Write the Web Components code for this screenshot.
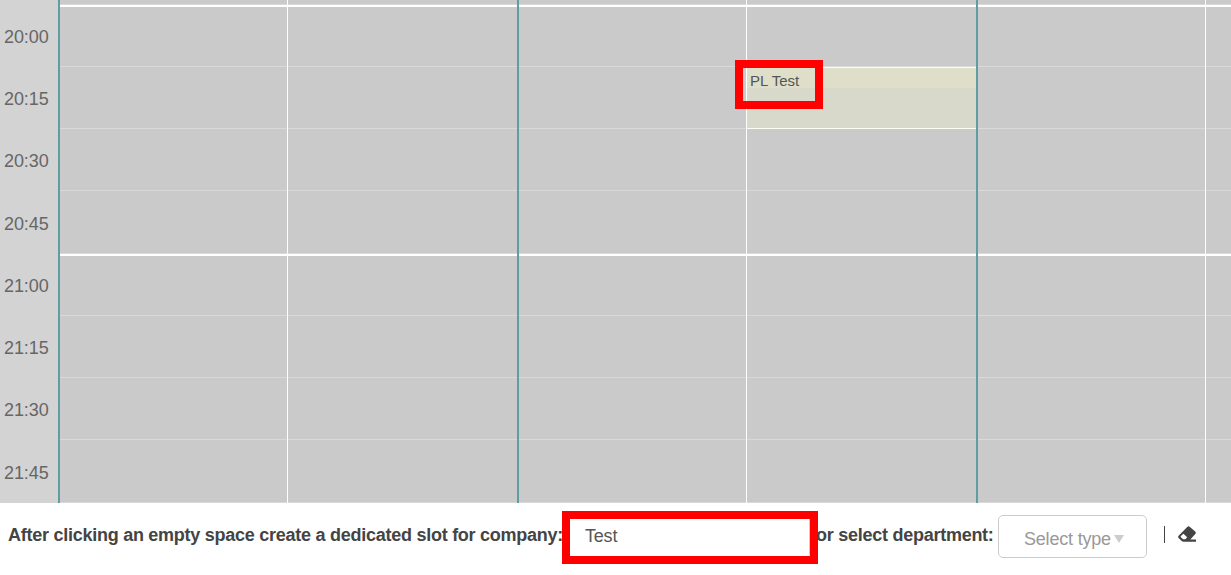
<!DOCTYPE html>
<html lang="en">
<head>
<meta charset="utf-8">
<title>Schedule</title>
<style>
    body {
        margin: 0;
        height: 575px;
        overflow: hidden;
        background: #fff;
        color: #444;
        font-family: "Liberation Sans", Arial, sans-serif;
        font-size: 18px;
    }
</style>
</head>
<body>
<schedule-view>
    <time-axis slot="axis" times="20:00,20:15,20:30,20:45,21:00,21:15,21:30,21:45"></time-axis>
    <day-column major style="width: 229px"></day-column>
    <day-column style="width: 230px"></day-column>
    <day-column major style="width: 229px"></day-column>
    <day-column style="width: 230px"><slot-event>PL Test</slot-event></day-column>
    <day-column major style="width: 229px"></day-column>
    <day-column style="width: 26px"></day-column>
</schedule-view>
<slot-toolbar>
    <span slot="company-label">After clicking an empty space create a dedicated slot for company:</span>
    <company-input slot="company">Test</company-input>
    <span slot="type-label">or select department:</span>
    <type-select slot="type">Select type</type-select>
</slot-toolbar>

<script>
    // quarter heights, the last one of each hour takes the spare pixel
    const ROWS = [62, 62, 62, 63, 62, 62, 62, 63];

    class ScheduleView extends HTMLElement {
        constructor() {
            super();
            this.attachShadow({ mode: 'open' });
            this.shadowRoot.innerHTML = `
                <style>
                    :host {
                        display: flex;
                        height: 503px;
                        background: #cacaca;
                    }
                </style>
                <slot name="axis"></slot>
                <slot></slot>`;
        }
    }
    customElements.define('schedule-view', ScheduleView);

    class TimeAxis extends HTMLElement {
        constructor() {
            super();
            this.attachShadow({ mode: 'open' });
            const times = this.getAttribute('times').split(',');
            this.shadowRoot.innerHTML = `
                <style>
                    :host {
                        display: flex;
                        flex-direction: column;
                        flex: none;
                        box-sizing: border-box;
                        width: 58px;
                        padding: 5px 0 0 4px;
                        background: #d3d3d3;
                        color: #666;
                        letter-spacing: -0.1px;
                    }
                    div {
                        flex: none;
                        box-sizing: border-box;
                        padding-top: 22px;
                        line-height: 20px;
                    }
                    div:nth-of-type(4n) {
                        padding-top: 23px;
                    }
                </style>
                ${times.map((t, i) => `<div style="height: ${ROWS[i]}px">${t}</div>`).join('')}`;
        }
    }
    customElements.define('time-axis', TimeAxis);

    class DayColumn extends HTMLElement {
        constructor() {
            super();
            this.attachShadow({ mode: 'open' });
            this.shadowRoot.innerHTML = `
                <style>
                    :host {
                        display: flex;
                        flex-direction: column;
                        flex: none;
                        position: relative;
                        box-sizing: border-box;
                        border-left: 1px solid #fff;
                    }
                    :host([major]) {
                        border-left: 2px solid #5f9ea0;
                    }
                    div {
                        flex: none;
                        box-sizing: border-box;
                        border-bottom: 1px solid #d9d9d9;
                    }
                    .hour {
                        border-top: 2px solid #fff;
                    }
                </style>
                <div style="height: 5px"></div>
                ${ROWS.map((h, i) => `<div class="${i % 4 ? '' : 'hour'}" style="height: ${h}px"></div>`).join('')}
                <slot></slot>`;
        }
    }
    customElements.define('day-column', DayColumn);

    class SlotEvent extends HTMLElement {
        constructor() {
            super();
            this.attachShadow({ mode: 'open' });
            this.shadowRoot.innerHTML = `
                <style>
                    :host {
                        position: absolute;
                        top: 67px;
                        left: 0;
                        right: 0;
                        height: 62px;
                        box-sizing: border-box;
                        border: solid #fdfdf0;
                        border-width: 1px 0;
                        background: #d8d9ca;
                        color: #555;
                        font-size: 15px;
                    }
                    .title {
                        height: 20px;
                        padding-left: 3px;
                        line-height: 26px;
                        background: #dedec9;
                    }
                    .mark {
                        position: absolute;
                        top: -8px;
                        left: -12px;
                        width: 72px;
                        height: 33px;
                        border: 8px solid #f00;
                    }
                </style>
                <div class="title"><slot></slot></div>
                <div class="mark"></div>`;
        }
    }
    customElements.define('slot-event', SlotEvent);

    class SlotToolbar extends HTMLElement {
        constructor() {
            super();
            this.attachShadow({ mode: 'open' });
            this.shadowRoot.innerHTML = `
                <style>
                    :host {
                        display: flex;
                        align-items: flex-start;
                        height: 64px;
                        padding: 8px 0 0 8px;
                        box-sizing: border-box;
                        white-space: nowrap;
                        line-height: 20px;
                    }
                    .label {
                        flex: none;
                        margin-top: 14px;
                        font-weight: bold;
                        letter-spacing: -0.26px;
                    }
                    .company-label {
                        width: 554px;
                    }
                    .type-label {
                        width: 182px;
                        margin-left: -2px;
                    }
                    .line {
                        width: 1px;
                        height: 17px;
                        margin: 15px 0 0 17px;
                        background: #444;
                    }
                    svg {
                        width: 18px;
                        height: 16px;
                        margin: 15px 0 0 13px;
                    }
                </style>
                <div class="label company-label"><slot name="company-label"></slot></div>
                <slot name="company"></slot>
                <div class="label type-label"><slot name="type-label"></slot></div>
                <slot name="type"></slot>
                <div class="line"></div>
                <svg viewBox="0 0 18 16">
                    <path fill="#444" fill-rule="evenodd" d="M9.2.9Q10.6-.2 11.9.9L17.2 5.4Q18.4 6.6 17.3 8L12.3 13.5H18V15.8H5.5Q4.5 15.8 3.7 15L.6 12.1Q-.4 10.9.6 9.7ZM5.4 7.8 2.9 10.1Q2.4 10.8 2.9 11.3L5.1 13.3H7.3L9.2 11.2Z"/>
                </svg>`;
        }
    }
    customElements.define('slot-toolbar', SlotToolbar);

    class CompanyInput extends HTMLElement {
        constructor() {
            super();
            this.attachShadow({ mode: 'open' });
            this.shadowRoot.innerHTML = `
                <style>
                    :host {
                        display: block;
                        flex: none;
                        position: relative;
                        box-sizing: border-box;
                        width: 256px;
                        height: 53px;
                        border: 8px solid #f00;
                        color: #555;
                        letter-spacing: -0.2px;
                    }
                    .field {
                        box-sizing: border-box;
                        height: 37px;
                        padding-left: 15px;
                        line-height: 34px;
                        background: #fff;
                        border-right: 1px solid #ccc;
                        border-bottom-right-radius: 2px;
                    }
                </style>
                <div class="field"><slot></slot></div>`;
        }
    }
    customElements.define('company-input', CompanyInput);

    class TypeSelect extends HTMLElement {
        constructor() {
            super();
            this.attachShadow({ mode: 'open' });
            this.shadowRoot.innerHTML = `
                <style>
                    :host {
                        display: flex;
                        align-items: center;
                        flex: none;
                        box-sizing: border-box;
                        width: 149px;
                        height: 43px;
                        margin-top: 4px;
                        padding: 4px 0 0 25px;
                        border: 1px solid #ccc;
                        border-radius: 5px;
                        color: #999;
                        letter-spacing: -0.2px;
                    }
                    i {
                        margin-left: 3px;
                        border: solid transparent;
                        border-width: 8px 5px 0;
                        border-top-color: #ccc;
                    }
                </style>
                <slot></slot><i></i>`;
        }
    }
    customElements.define('type-select', TypeSelect);
</script>
</body>
</html>
